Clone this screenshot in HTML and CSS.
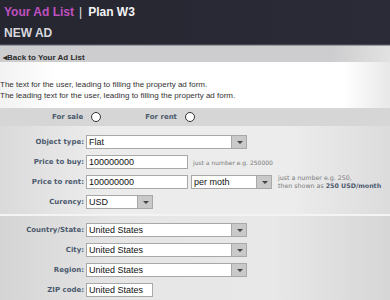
FILE: index.html
```html
<!DOCTYPE html>
<html lang="en">
<head>
    <meta charset="UTF-8">
    <meta name="viewport" content="width=device-width, initial-scale=1.0">
    <title>New Ad</title>
    <link rel="stylesheet" href="styles.css">
</head>
<body>
    <div class="header">
        <div class="crumbs"><span class="ad-list">Your Ad List</span><span class="sep">|</span><span class="plan">Plan W3</span></div>
        <h1>NEW AD</h1>
    </div>
    <div class="backbar"><a href="#">&#9666;Back to Your Ad List</a></div>

    <div class="intro">
        <p>The text for the user, leading to filling the property ad form.</p>
        <p>The leading text for the user, leading to filling the property ad form.</p>
    </div>

    <div class="dealbar">
        <label class="deal">For sale <span class="radio"></span></label>
        <label class="deal">For rent <span class="radio"></span></label>
    </div>

    <!-- Property and price -->
    <div class="section">
        <div class="row">
            <label class="lbl">Object type:</label>
            <div class="select w-wide"><select><option>Flat</option></select><span class="arrow"></span></div>
        </div>
        <div class="row">
            <label class="lbl">Price to buy:</label>
            <input class="field w-mid" type="text" value="100000000">
            <span class="hint">just a number e.g. 250000</span>
        </div>
        <div class="row">
            <label class="lbl">Price to rent:</label>
            <input class="field w-mid" type="text" value="100000000">
            <div class="select w-period"><select><option>per moth</option></select><span class="arrow"></span></div>
            <span class="hint hint-two">just a number e.g. 250,<br>then shown as <b>250 USD/month</b></span>
        </div>
        <div class="row">
            <label class="lbl">Curency:</label>
            <div class="select w-small"><select><option>USD</option></select><span class="arrow"></span></div>
        </div>
    </div>

    <!-- Location -->
    <div class="section location">
        <div class="row">
            <label class="lbl">Country/State:</label>
            <div class="select w-wide"><select><option>United States</option></select><span class="arrow"></span></div>
        </div>
        <div class="row">
            <label class="lbl">City:</label>
            <div class="select w-wide"><select><option>United States</option></select><span class="arrow"></span></div>
        </div>
        <div class="row">
            <label class="lbl">Region:</label>
            <div class="select w-wide"><select><option>United States</option></select><span class="arrow"></span></div>
        </div>
        <div class="row">
            <label class="lbl">ZIP code:</label>
            <input class="field w-small" type="text" value="United States">
        </div>
    </div>
</body>
</html>
```

FILE: styles.css
```css
body {
    margin: 0;
    font-family: "Liberation Sans", Arial, sans-serif;
    background-color: #e6e6e6;
    color: #333;
}
/* Header */
.header {
    height: 45px;
    box-sizing: border-box;
    padding: 5px 0 0 4px;
    background: linear-gradient(to right, #262631, #2b2b37);
    border-bottom: 1px solid #45454f;
}
.crumbs {
    font-size: 12px;
    font-weight: bold;
    line-height: 15px;
}
.ad-list {
    color: #c050c0;
}
.sep {
    color: #e6e6e6;
    font-weight: normal;
    margin: 0 6px 0 5px;
}
.plan {
    color: #f4f4f4;
}
h1 {
    margin: 6px 0 0 0;
    font-size: 12px;
    line-height: 15px;
    color: #d8d8dc;
}
.backbar {
    height: 16px;
    padding-left: 3px;
    background: linear-gradient(to right, #cdcdcf 85%, #e2e2e2);
    border-top: 1px solid #9a9aa0;
}
.backbar a {
    font-size: 8px;
    font-weight: bold;
    line-height: 17px;
    color: #2c2c2c;
    text-decoration: none;
}
/* Intro text */
.intro {
    height: 46px;
    box-sizing: border-box;
    padding-top: 17px;
    background: linear-gradient(to right, #f2f2f2, #fff 15%, #fff 88%, #e8e8e8);
}
.intro p {
    margin: 0;
    font-size: 8px;
    line-height: 11px;
    color: #333;
}
/* For sale / For rent */
.dealbar {
    height: 18px;
    display: flex;
    align-items: center;
    padding-left: 52px;
    gap: 44px;
    background-color: #d6d6d6;
}
.deal {
    display: flex;
    align-items: center;
    gap: 8px;
    font-family: "DejaVu Sans", Verdana, sans-serif;
    font-size: 7px;
    font-weight: bold;
    color: #4c5a6e;
}
.radio {
    width: 8px;
    height: 8px;
    border: 1.5px solid #333;
    border-radius: 50%;
    background-color: #fff;
}
/* Form sections */
.section {
    padding: 9px 0 5px 0;
    display: flex;
    flex-direction: column;
    gap: 6px;
    background: linear-gradient(to right, #dadada, #ececec 25%, #ececec 75%, #dcdcdc);
}
.location {
    padding-top: 7px;
    border-top: 2px solid #f4f4f4;
    background: linear-gradient(to right, #d4d4d4, #e6e6e6 30%, #e8e8e8 70%, #d6d6d6);
}
.row {
    display: flex;
    align-items: center;
    height: 14px;
}
.lbl {
    width: 84px;
    margin-right: 2px;
    text-align: right;
    font-family: "DejaVu Sans", Verdana, sans-serif;
    font-size: 7px;
    font-weight: bold;
    color: #4c5a6e;
}
.field,
.select select {
    box-sizing: border-box;
    height: 14px;
    margin: 0;
    padding: 0 2px;
    border: 1px solid #a8a8a8;
    background-color: #fff;
    font-family: "Liberation Sans", Arial, sans-serif;
    font-size: 9px;
    color: #111;
    outline: none;
}
.select {
    position: relative;
    height: 14px;
}
.select select {
    display: block;
    width: 100%;
    -webkit-appearance: none;
    appearance: none;
    border-radius: 0;
}
.arrow {
    position: absolute;
    top: 0;
    right: 0;
    width: 16px;
    height: 14px;
    box-sizing: border-box;
    border: 1px solid #a8a8a8;
    background-color: #c9c9c9;
}
.arrow::after {
    content: "";
    position: absolute;
    left: 5px;
    top: 5px;
    border-left: 3px solid transparent;
    border-right: 3px solid transparent;
    border-top: 3px solid #444;
}
.w-wide { width: 161px; }
.w-mid { width: 102px; }
.w-period { width: 81px; margin-left: 3px; }
.w-small { width: 67px; }
.hint {
    margin-left: 5px;
    font-family: "DejaVu Sans", Verdana, sans-serif;
    font-size: 6px;
    color: #7a7a7a;
}
.hint-two {
    margin-left: 6px;
    line-height: 8px;
    font-size: 6.3px;
}
.hint b {
    color: #4c5a6e;
}
```
